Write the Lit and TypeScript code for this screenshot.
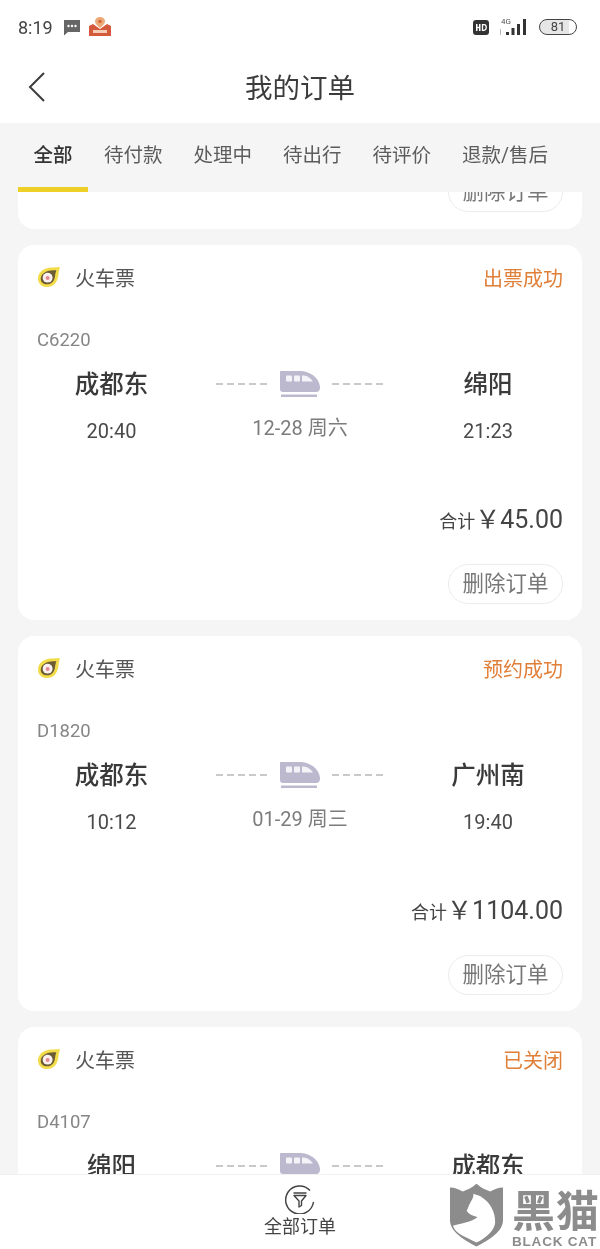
import { LitElement, css, html } from "lit";
import { customElement } from "lit/decorators.js";

interface Order {
  status: string;
  train: string;
  from: string;
  to: string;
  depart: string;
  arrive: string;
  date: string;
  total: string;
}

const TABS = ["全部", "待付款", "处理中", "待出行", "待评价", "退款/售后"];

const ORDERS: Order[] = [
  { status: "出票成功", train: "C6220", from: "成都东", to: "绵阳", depart: "20:40", arrive: "21:23", date: "12-28 周六", total: "45.00" },
  { status: "预约成功", train: "D1820", from: "成都东", to: "广州南", depart: "10:12", arrive: "19:40", date: "01-29 周三", total: "1104.00" },
  { status: "已关闭", train: "D4107", from: "绵阳", to: "成都东", depart: "18:05", arrive: "18:48", date: "01-02 周四", total: "45.00" },
];

const trainIcon = html`<svg class="train" viewBox="0 0 42 28" width="42" height="28">
  <path fill="#bcb9cf" d="M2 0h19c10 0 19 7 20 15.500.3 3.500-1 5.500-4 5.500H4c-2 0-3-1-3-3V1c0-.6.4-1 1-1z" />
  <rect x="7" y="4.500" width="6" height="6" rx="1" fill="#f4f3f8" />
  <rect x="15" y="4.500" width="6" height="6" rx="1" fill="#f4f3f8" />
  <path fill="#f4f3f8" d="M23 4.500h2c3 0 7 3 9 6H23z" />
  <rect x="2" y="23.500" width="36" height="2.500" fill="#bcb9cf" />
</svg>`;

const orderIcon = html`<svg viewBox="0 0 26 24" width="24" height="22">
  <path fill="#f3dc4a" d="M25 1c-2 .2-7 .4-10 .6C8 2.200 1.500 6 1 13c-.4 5.800 4.200 10 10 10 6.800 0 11-5.200 12-11.500.5-3.500.7-7 2-10.500z" />
  <path fill="#6b5c34" d="M21 4.500c-2 0-4 .2-6 .4C9.500 5.500 4.500 8.500 4 13.500c-.3 3.800 3 6.500 7 6.500 4.800 0 8-3.700 8.500-8.500.2-2.300.6-4.800 1.500-7z" />
  <circle cx="11.500" cy="12.700" r="5.400" fill="#fbf0f0" />
  <circle cx="11.500" cy="13" r="2.200" fill="#e58a94" />
</svg>`;

@customElement("app-root")
export class AppRoot extends LitElement {
  static styles = css`
    :host {
      display: block;
      position: relative;
      width: 600px;
      height: 1249px;
      overflow: hidden;
      background: #f5f5f5;
      color: #333;
      font-family: "Roboto", "Noto Sans CJK SC", sans-serif;
      /* the reference is a soft, upscaled photo of the screen */
      filter: blur(0.45px);
    }
    .page {
      display: flex;
      flex-direction: column;
      height: 100%;
    }
    .top {
      background: #fff;
      height: 123px;
      flex: none;
    }
    .status {
      height: 54px;
      display: flex;
      align-items: center;
      padding: 0 23px 0 18px;
      color: #444;
    }
    .clock {
      font-size: 18px;
      margin-right: 2px;
    }
    .status-left {
      display: flex;
      align-items: center;
      gap: 8px;
      flex: 1;
    }
    .status-right {
      display: flex;
      align-items: center;
      gap: 10px;
    }
    .battery {
      width: 38px;
      height: 16px;
      box-sizing: border-box;
      border: 1.500px solid #444;
      border-radius: 8px;
      font-size: 13px;
      line-height: 13px;
      text-align: center;
      background: linear-gradient(90deg, #e6e6e6 80%, #fff 80%);
    }
    .title-bar {
      height: 69px;
      display: flex;
      align-items: center;
      justify-content: center;
      position: relative;
    }
    .back {
      position: absolute;
      left: 26px;
      top: 18px;
    }
    .title {
      font-size: 27.500px;
      color: #3c3c3c;
      padding-bottom: 6px;
    }
    .tabs {
      height: 69px;
      flex: none;
      display: flex;
      align-items: flex-start;
      padding-left: 18px;
      background: #f5f5f5;
      position: relative;
      z-index: 1;
    }
    .tab {
      font-size: 19.500px;
      color: #5c5c5c;
      line-height: 27px;
      padding-top: 19px;
      box-sizing: border-box;
      height: 69px;
      margin-right: 31px;
      white-space: nowrap;
    }
    .tab.active {
      width: 70px;
      margin-right: 16px;
      text-align: center;
      color: #333;
      font-weight: 500;
      border-bottom: 5px solid #edcf28;
    }
    .list {
      flex: 1;
      min-height: 0;
      overflow: hidden;
      padding: 0 18px;
    }
    .list-inner {
      display: flex;
      flex-direction: column;
      gap: 16px;
      margin-top: -92px;
    }
    .stub {
      height: 129px;
      flex: none;
      background: #fff;
      border-radius: 16px;
      display: flex;
      align-items: flex-start;
      justify-content: flex-end;
      padding: 72px 19px 0 0;
      box-sizing: border-box;
    }
    .card {
      flex: none;
      height: 375px;
      background: #fff;
      border-radius: 16px;
      padding: 0 19px;
      box-sizing: border-box;
    }
    .card-head {
      height: 68px;
      display: flex;
      align-items: center;
      font-size: 20px;
      padding-bottom: 4px;
      box-sizing: border-box;
    }
    .card-head svg {
      flex: none;
      margin-right: 14px;
    }
    .kind {
      flex: 1;
      color: #555;
      font-size: 20px;
    }
    .state {
      color: #e07f38;
    }
    .train-no {
      margin-top: 15px;
      font-size: 18.500px;
      line-height: 24px;
      color: #868686;
    }
    .route {
      display: grid;
      grid-template-columns: 187px 1fr 188px;
      margin: 15px -19px 0;
      text-align: center;
    }
    .station {
      font-size: 24.500px;
      line-height: 36px;
      font-weight: 500;
      color: #3a3a3a;
    }
    .time {
      font-size: 20px;
      line-height: 28px;
      margin-top: 14px;
      color: #4a4a4a;
    }
    .middle {
      display: flex;
      flex-direction: column;
      align-items: center;
      padding-left: 1px;
    }
    .track {
      display: flex;
      align-items: center;
      gap: 11px;
      height: 36px;
    }
    .train {
      margin-top: -1px;
    }
    .dash {
      width: 52px;
      height: 2px;
      margin-top: -2px;
      background: repeating-linear-gradient(90deg, #c9c9c9 0 7px, transparent 7px 11px);
    }
    .date {
      font-size: 20px;
      line-height: 28px;
      margin-top: 11px;
      color: #7c7c7c;
    }
    .total {
      margin-top: 57px;
      display: flex;
      justify-content: flex-end;
      align-items: baseline;
      color: #444;
      line-height: 36px;
      font-size: 18px;
    }
    .total b {
      font-weight: 400;
      font-size: 25px;
    }
    .actions {
      display: flex;
      justify-content: flex-end;
      margin-top: 24px;
    }
    .delete {
      width: 115px;
      height: 40px;
      box-sizing: border-box;
      border: 1.500px solid #ececec;
      border-radius: 20px;
      font-size: 21.500px;
      line-height: 37px;
      text-align: center;
      color: #777;
    }
    .footer {
      height: 75px;
      flex: none;
      background: #fff;
      border-top: 1px solid #f0f0f0;
      box-sizing: border-box;
      display: flex;
      flex-direction: column;
      align-items: center;
      padding-top: 9px;
      position: relative;
      z-index: 1;
      font-size: 18px;
      color: #444;
      line-height: 26px;
    }
    .watermark {
      position: absolute;
      left: 449px;
      top: 1184px;
      width: 151px;
      height: 65px;
      z-index: 2;
      display: flex;
      color: #8c8c8c;
    }
    .mark-text {
      margin-left: 8px;
      display: flex;
      flex-direction: column;
      align-items: flex-start;
    }
    .mark-cn {
      font-size: 43px;
      line-height: 44px;
      margin-top: 6px;
      font-weight: 700;
      letter-spacing: 1px;
      white-space: nowrap;
    }
    .mark-en {
      font-family: "Liberation Sans", sans-serif;
      font-size: 13.500px;
      line-height: 14px;
      margin-top: 1px;
      font-weight: 700;
      letter-spacing: 0.800px;
      white-space: nowrap;
    }
  `;

  renderCard(o: Order) {
    return html`<article class="card">
      <div class="card-head">
        ${orderIcon}
        <span class="kind">火车票</span>
        <span class="state">${o.status}</span>
      </div>
      <div class="train-no">${o.train}</div>
      <div class="route">
        <div>
          <div class="station">${o.from}</div>
          <div class="time">${o.depart}</div>
        </div>
        <div class="middle">
          <div class="track"><span class="dash"></span>${trainIcon}<span class="dash"></span></div>
          <div class="date">${o.date}</div>
        </div>
        <div>
          <div class="station">${o.to}</div>
          <div class="time">${o.arrive}</div>
        </div>
      </div>
      <div class="total"><span>合计</span><b>￥${o.total}</b></div>
      <div class="actions"><div class="delete">删除订单</div></div>
    </article>`;
  }

  render() {
    return html`<div class="page">
        <header class="top">
          <div class="status">
            <div class="status-left">
              <span class="clock">8:19</span>
              <svg viewBox="0 0 18 17" width="18" height="17">
                <path fill="#666" d="M1 1h16v12H5l-4 3.500z" />
                <circle cx="5.500" cy="7" r="1.200" fill="#fff" />
                <circle cx="9" cy="7" r="1.200" fill="#fff" />
                <circle cx="12.500" cy="7" r="1.200" fill="#fff" />
              </svg>
              <svg viewBox="0 0 22 20" width="22" height="20">
                <path fill="#ecaa78" d="M11 0c3 0 5 2 5 4.500 0 2-3 5-5 6.500-2-1.500-5-4.500-5-6.500C6 2 8 0 11 0z" />
                <circle cx="11" cy="4.500" r="1.800" fill="#d9683a" />
                <path fill="#d4583a" d="M0 9l4-2 7 5 7-5 4 2v10H0z" />
                <rect x="4" y="13" width="14" height="3" fill="#f3cdb5" />
              </svg>
            </div>
            <div class="status-right">
              <svg viewBox="0 0 16 15" width="16" height="15">
                <rect width="16" height="15" rx="3" fill="#333" />
                <rect x="3" y="4" width="1.500" height="7" fill="#fff" />
                <rect x="6" y="4" width="1.500" height="7" fill="#fff" />
                <rect x="3" y="6.800" width="4" height="1.400" fill="#fff" />
                <path d="M9.500 4.700h1.500c3 0 3 5.600 0 5.600H9.500z" fill="none" stroke="#fff" stroke-width="1.300" />
              </svg>
              <svg viewBox="0 0 30 22" width="30" height="22">
                <text x="2" y="8" font-size="8" fill="#555" font-family="Roboto, sans-serif">4G</text>
                <rect x="1" y="13" width="1" height="6" fill="#bbb" />
                <rect x="7" y="16" width="3" height="3" fill="#333" />
                <rect x="12.500" y="12" width="3" height="7" fill="#333" />
                <rect x="18" y="8" width="3" height="11" fill="#333" />
                <rect x="24" y="3" width="3" height="16" fill="#333" />
              </svg>
              <div class="battery">81</div>
            </div>
          </div>
          <div class="title-bar">
            <svg class="back" viewBox="0 0 20 30" width="20" height="30">
              <path d="M18 1 4 15l14 14" fill="none" stroke="#3c3c3c" stroke-width="2" />
            </svg>
            <span class="title">我的订单</span>
          </div>
        </header>
        <nav class="tabs">
          ${TABS.map((t, i) => html`<div class="tab ${i === 0 ? "active" : ""}">${t}</div>`)}
        </nav>
        <main class="list">
          <div class="list-inner">
            <div class="stub"><div class="delete">删除订单</div></div>
            ${ORDERS.map((o) => this.renderCard(o))}
          </div>
        </main>
        <footer class="footer">
          <svg viewBox="0 0 30 30" width="30" height="30">
            <path d="M25 6.500A14 14 0 1 0 28.500 18" fill="none" stroke="#444" stroke-width="1.500" />
            <path d="M8.500 9h13M9 11.500l5 5.500v6l2.500-1.500V17l4.500-5.500z" fill="none" stroke="#444" stroke-width="1.400" stroke-linejoin="round" />
          </svg>
          <span>全部订单</span>
        </footer>
      </div>
      <div class="watermark">
        <svg viewBox="4 4 56 65" width="56" height="65">
          <path fill="#8c8c8c" d="M5 7c5 0 9 2 13 4 5-2 10-4 14-8 4 4 9 6 14 8 4-2 8-4 13-4v33C59 52 45 60 32 67 19 60 5 52 5 40z" />
          <path fill="#fff" d="M29 13c2 2 5 1 7 3 10 6 15 16 15 26 0 8-9 16-19 21C22 58 10 54 8 46c6-2 20-4 25-9-5-1-9-3-11-6l2-5c2-5 5-8 5-13z" />
        </svg>
        <div class="mark-text">
          <span class="mark-cn">黑猫</span>
          <span class="mark-en">BLACK CAT</span>
        </div>
      </div>`;
  }
}
